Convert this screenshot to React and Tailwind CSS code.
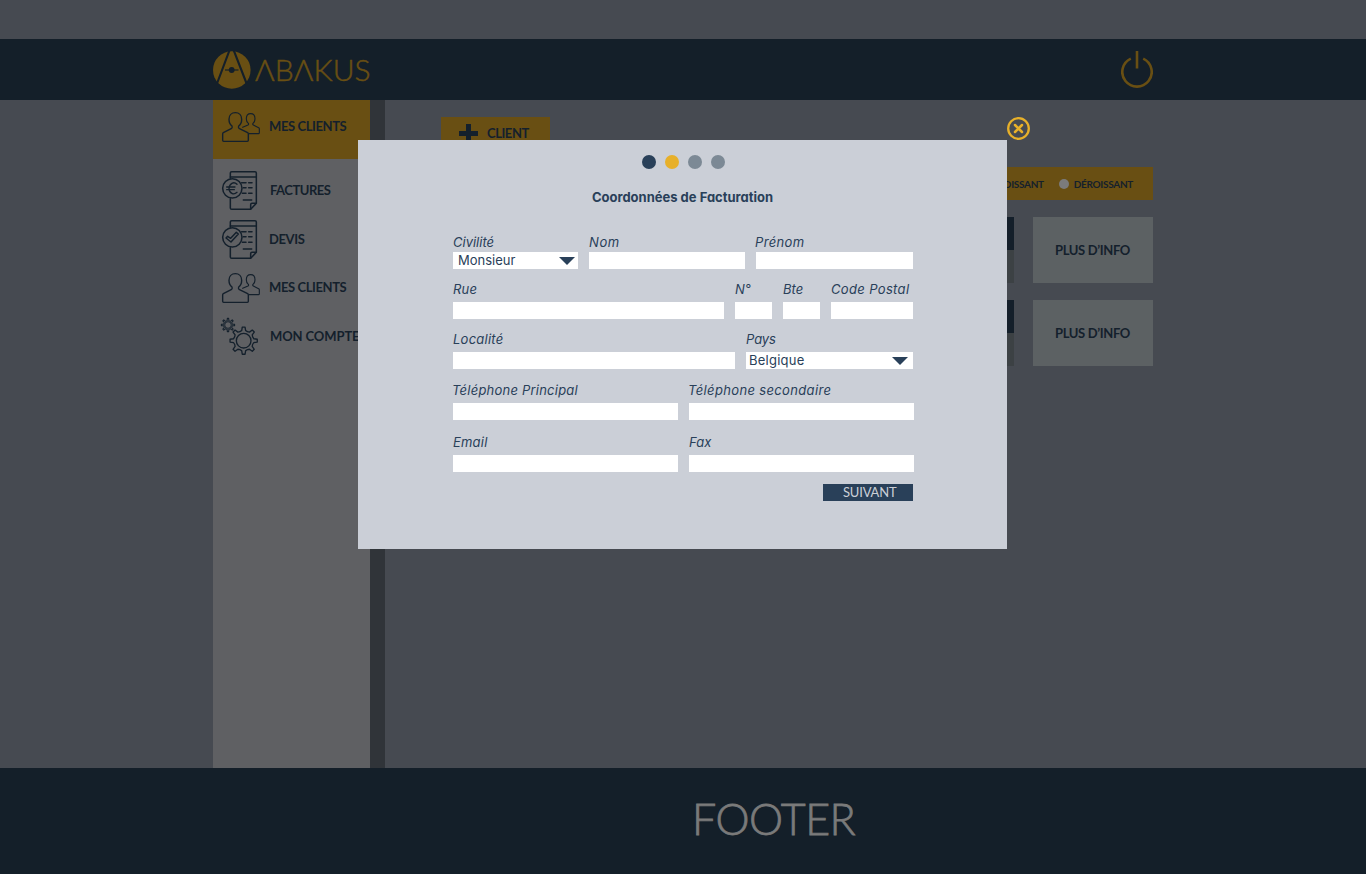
function gearPath(cx, cy, outer, inner, teeth) {
  const step = (Math.PI * 2) / teeth;
  const at = (r, a) => `${(cx + r * Math.cos(a)).toFixed(2)} ${(cy + r * Math.sin(a)).toFixed(2)}`;
  const parts = [];
  for (let i = 0; i < teeth; i++) {
    const a = i * step - Math.PI / 2;
    parts.push(`${i === 0 ? "M" : "L"}${at(inner, a - step * 0.24)}`);
    parts.push(`L${at(outer, a - step * 0.13)}`);
    parts.push(`L${at(outer, a + step * 0.13)}`);
    parts.push(`L${at(inner, a + step * 0.24)}`);
    parts.push(`Q${at(inner * 0.9, a + step * 0.5)} ${at(inner, a + step * 0.76)}`);
  }
  return parts.join(" ") + "Z";
}

function UsersIcon() {
  return (
    <svg width="40" height="32" viewBox="48 33 120 96" fill="none" stroke="#14202c" strokeWidth="4.2" strokeLinejoin="round" strokeLinecap="round">
      <path d="M81 78C75 74 72 67 72 58C72 46 80 38 91 38C102 38 110 46 110 58C110 67 107 74 101 78C100 81 100 83 102 85L128 98Q130 99 130 102V121Q130 124 127 124H56Q53 124 53 121V102Q53 99 55 98L80 85C82 83 82 81 81 78" />
      <path strokeWidth="3.4" d="M113 82L129 75C131 74 131 72 130 70C126 67 124 62 124 56C124 47 129 41 137 41C145 41 150 47 150 56C150 62 148 67 144 70C143 72 143 74 145 75L161 83Q163 84 163 86V98Q163 101 160 101H133" />
    </svg>
  );
}

function DocumentIcon({ children }) {
  return (
    <svg width="37" height="41" viewBox="48 210 111 123" fill="none" stroke="#14202c" strokeWidth="4.6" strokeLinejoin="round" strokeLinecap="round">
      <path d="M76 235V219Q76 215 80 215H150Q154 215 154 219V310L137 328H80Q76 328 76 324V296" />
      <path d="M137 327V314Q137 310 141 310H153" />
      <path d="M76 231H153" strokeWidth="4" />
      <path d="M110 248H123M131 248H141M115 263H123M131 263H141M112 280H123M131 280H141M115 300H140" />
      <circle cx="82" cy="265" r="29" />
      {children}
    </svg>
  );
}

function InvoiceIcon() {
  return (
    <DocumentIcon>
      <path d="M96 253C86 243 73 251 72 265C73 280 86 287 96 277M65 261H90M65 269H88" strokeWidth="4" />
    </DocumentIcon>
  );
}

function QuoteIcon() {
  return (
    <DocumentIcon>
      <path d="M63 267L68 262L77 268L94 250L100 255L78 279Z" strokeWidth="4.4" />
    </DocumentIcon>
  );
}

function GearsIcon() {
  return (
    <svg className="overflow-visible" width="39" height="39" viewBox="48 321 117 117" fill="none" stroke="#14202c" strokeWidth="4" strokeLinejoin="round">
      <path d={gearPath(116, 392, 41, 31, 8)} />
      <circle cx="116" cy="392" r="22" />
      <path strokeWidth="3.1" d={gearPath(69, 345, 20, 13.5, 8)} />
      <circle strokeWidth="2.8" cx="69" cy="345" r="10" />
    </svg>
  );
}

function Logo() {
  return (
    <div className="flex items-center" aria-label="Abakus">
      <svg width="38" height="38" viewBox="0 0 38 38">
        <circle cx="18.8" cy="19" r="18.8" fill="#694f13" />
        <path d="M16.6 -1L4.2 32M20.6 -1L33.4 32" stroke="#141f29" strokeWidth="2.1" />
        <path d="M12 19H25.5" stroke="#141f29" strokeWidth="1.2" />
        <circle cx="18.7" cy="19" r="2.9" fill="#141f29" />
      </svg>
      <span className="-mt-px ml-[4px] font-['Lato',sans-serif] text-[30px] leading-[38px] font-light tracking-[0.1px] text-[#694f13] [-webkit-text-stroke:0.5px_#694f13]">ΛBΛKUS</span>
    </div>
  );
}

function NavItem({ icon, label, className }) {
  return (
    <li className={"flex items-center pl-2 " + className}>
      <span className="flex w-[48px] shrink-0">{icon}</span>
      <span className="-mt-px font-['Lato',sans-serif] text-[13px] leading-4 font-bold whitespace-nowrap text-[#14202c]">{label}</span>
    </li>
  );
}

function ClientRow() {
  return (
    <div className="flex h-[66px] justify-between">
      <div className="flex w-[573px] flex-col">
        <div className="h-[33px] bg-[#141f2a]" />
        <div className="h-[33px] bg-[#3c4144]" />
      </div>
      <div className="flex w-[120px] items-center justify-center bg-[#5c6163] pt-[2px] pr-px font-['Lato',sans-serif] text-[13px] font-bold tracking-[-0.35px] text-[#14202c]">
        PLUS D’INFO
      </div>
    </div>
  );
}

function Field({ label, width, gap = "gap-1", tracking = "tracking-[0.2px]", shift = "", value, pad = "" }) {
  return (
    <div className={"flex flex-col " + gap + " " + width}>
      <label className={"h-[17px] text-[13px] leading-[17px] whitespace-nowrap italic " + tracking + " " + shift}>{label}</label>
      <div className={"flex h-[17px] items-center justify-between bg-white text-[13px] leading-[17px] " + pad}>
        {value && (
          <>
            <span>{value}</span>
            <svg width="16" height="8" viewBox="0 0 16 8">
              <path d="M0 0H16L8 8Z" fill="#294059" />
            </svg>
          </>
        )}
      </div>
    </div>
  );
}

function Modal() {
  return (
    <section className="absolute top-[140px] left-[358px] h-[409px] w-[649px] bg-[#cbcfd7] font-['Inter',sans-serif] text-[#294059] [font-feature-settings:'cv11']">
      <svg className="absolute -top-[23px] -right-[23px]" width="23" height="23" viewBox="0 0 23 23" fill="none" stroke="#e7b02a">
        <circle cx="11.5" cy="11.5" r="10.3" strokeWidth="2.3" />
        <path d="M8 8L15 15M15 8L8 15" strokeWidth="2.5" strokeLinecap="round" />
      </svg>
      <div className="flex justify-center gap-[9px] pt-[15px] pl-[2px]">
        <span className="size-[14px] rounded-full bg-[#294059]" />
        <span className="size-[14px] rounded-full bg-[#e7b02a]" />
        <span className="size-[14px] rounded-full bg-[#7c8995]" />
        <span className="size-[14px] rounded-full bg-[#7c8995]" />
      </div>
      <h2 className="mt-5 text-center text-[13px] leading-[17px] font-bold">Coordonnées de Facturation</h2>
      <form className="mt-[28px] ml-[95px] w-[461px] font-normal">
        <div className="flex gap-[11px]">
          <Field label="Civilité" width="w-[125px]" gap="gap-px" tracking="tracking-[0px]" value="Monsieur" pad="pl-[5px] pr-[3px] tracking-[0px]" />
          <Field label="Nom" width="w-[156px]" gap="gap-px" tracking="tracking-[0.6px]" />
          <Field label="Prénom" width="w-[157px]" gap="gap-px" tracking="tracking-[0.35px]" shift="-ml-px" />
        </div>
        <div className="mt-3 flex gap-[11px]">
          <Field label="Rue" width="w-[271px]" tracking="tracking-[0.2px]" />
          <Field label="N°" width="w-[37px]" tracking="tracking-[0px]" />
          <Field label="Bte" width="w-[37px]" tracking="tracking-[0.1px]" />
          <Field label="Code Postal" width="w-[82px]" tracking="tracking-[0.35px]" />
        </div>
        <div className="mt-3 flex gap-[11px]">
          <Field label="Localité" width="w-[282px]" tracking="tracking-[0.25px]" />
          <Field label="Pays" width="w-[167px]" tracking="tracking-[-0.1px]" value="Belgique" pad="pl-[3px] pr-[5px] tracking-[0.25px]" />
        </div>
        <div className="mt-[13px] flex gap-[11px]">
          <Field label="Téléphone Principal" width="w-[225px]" tracking="tracking-[0.22px]" shift="-ml-px" />
          <Field label="Téléphone secondaire" width="w-[225px]" tracking="tracking-[0.35px]" shift="-ml-px" />
        </div>
        <div className="mt-[14px] flex gap-[11px]">
          <Field label="Email" width="w-[225px]" tracking="tracking-[0.2px]" />
          <Field label="Fax" width="w-[225px]" tracking="tracking-[0px]" />
        </div>
        <button type="button" className="mt-3 ml-[370px] flex h-[17px] w-[90px] items-center bg-[#294059] pl-[20px] font-['Lato',sans-serif] text-[13px] leading-[17px] font-normal tracking-[-0.2px] text-[#cbcfd7]">
          SUIVANT
        </button>
      </form>
    </section>
  );
}

export default function App() {
  return (
    <div className="relative flex h-[874px] w-[1366px] flex-col overflow-hidden bg-[#464a51]">
      <header className="mt-[39px] flex h-[61px] shrink-0 items-center justify-between bg-[#141f29] pr-[213px] pl-[213px]">
        <Logo />
        <svg width="32" height="38" viewBox="0 0 32 38" fill="none" stroke="#694f13" strokeWidth="2.6">
          <path d="M9.8 7.6A14.7 14.7 0 1 0 22.2 7.6" />
          <path d="M16 0V17.5" />
        </svg>
      </header>
      <main className="flex min-h-0 flex-1 pl-[213px]">
        <aside className="w-[157px] shrink-0 bg-[#5f6063]">
          <ul>
            <NavItem icon={<UsersIcon />} label="MES CLIENTS" className="mb-[7px] h-[59px] bg-[#694f13] pb-[6px] tracking-[-0.4px]" />
            <NavItem icon={<InvoiceIcon />} label="FACTURES" className="h-[49px] pl-[9px] tracking-[-0.5px] [&_svg]:-ml-px" />
            <NavItem icon={<QuoteIcon />} label="DEVIS" className="h-[48px] tracking-[-0.4px]" />
            <NavItem icon={<UsersIcon />} label="MES CLIENTS" className="h-[49px] tracking-[-0.4px]" />
            <NavItem icon={<GearsIcon />} label="MON COMPTE" className="h-[49px] pl-[9px] tracking-[-0.1px] [&_svg]:-ml-px" />
          </ul>
        </aside>
        <div className="w-[15px] shrink-0 bg-[#303439]" />
        <div className="ml-[56px] w-[712px] pt-[17px]">
          <button type="button" className="flex h-[33px] w-[109px] items-center bg-[#694f13] pl-[18px] font-['Lato',sans-serif] text-[13px] font-bold tracking-[-0.45px] text-[#14202c]">
            <svg className="mr-[9px]" width="19" height="19" viewBox="0 0 19 19">
              <path d="M7 0H12V7H19V12H12V19H7V12H0V7H7Z" fill="#14202c" />
            </svg>
            CLIENT
          </button>
          <div className="mt-[17px] flex h-[33px] items-center justify-end bg-[#694f13] pt-px pr-[20px] font-['Lato',sans-serif] text-[10px] font-bold tracking-[-0.3px] text-[#14202c]">
            <span className="mr-[10px] size-[10px] rounded-full bg-[#7b7b7c]" />
            <span className="mr-[15px]">CROISSANT</span>
            <span className="mr-[5px] size-[10px] rounded-full bg-[#7b7b7c]" />
            <span>DÉROISSANT</span>
          </div>
          <div className="mt-[17px] flex flex-col gap-[17px]">
            <ClientRow />
            <ClientRow />
          </div>
        </div>
      </main>
      <footer className="flex h-[106px] shrink-0 items-center bg-[#141f29] pb-[4px] pl-[692px] font-['Lato',sans-serif] text-[43px] font-light tracking-[-0.5px] text-[#7a7a7a] [-webkit-text-stroke:0.8px_#7a7a7a]">
        FOOTER
      </footer>
      <Modal />
    </div>
  );
}
